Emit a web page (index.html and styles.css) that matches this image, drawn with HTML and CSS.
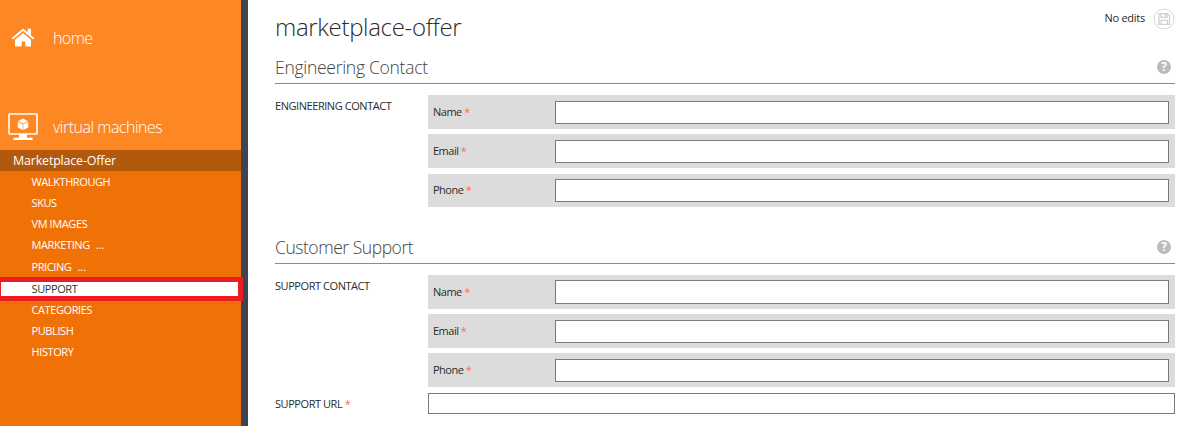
FILE: index.html
```html
<!DOCTYPE html>
<html lang="en">
<head>
<meta charset="utf-8">
<title>marketplace-offer</title>
<link rel="stylesheet" href="styles.css">
</head>
<body>
<div class="app">
  <nav class="sidebar">
    <a class="nav-main nav-home">
      <svg class="icon-home" width="24" height="20" viewBox="0 0 24 20"><path fill="#fff" d="M4 11.800 12 5 20 11.800V18.600H14.200V13.500H10.800V18.600H4z"/><path fill="none" stroke="#fff" stroke-width="1.800" d="M1.300 10.800 12 1.800 22.700 10.800"/><path fill="#fff" d="M16.600.8H20V7.500L16.600 4.600z"/></svg>
      <span>home</span>
    </a>
    <a class="nav-main nav-vm">
      <svg class="icon-vm" width="30" height="28" viewBox="0 0 30 28"><rect x="1" y="1" width="28" height="20" rx="1" fill="none" stroke="#fff" stroke-width="1.600"/><path fill="#fff" d="M11 21h8v3.800h5.500V27h-19V24.800H11z"/><path fill="#fff" d="M15 5.500 19.800 8 15 10.500 10.200 8zM9.800 8.700 14.700 11.300V17L9.800 14.400zM20.200 8.700 15.300 11.300V17L20.200 14.400z"/></svg>
      <span>virtual machines</span>
    </a>
    <div class="offer"><span>Marketplace-Offer</span></div>
    <ul class="menu">
      <li><span>WALKTHROUGH</span></li>
      <li><span>SKUS</span></li>
      <li><span>VM IMAGES</span></li>
      <li><span>MARKETING</span><i>...</i></li>
      <li class="pricing"><span>PRICING</span><i>...</i></li>
      <li class="selected"><span>SUPPORT</span></li>
      <li><span>CATEGORIES</span></li>
      <li><span>PUBLISH</span></li>
      <li><span>HISTORY</span></li>
    </ul>
  </nav>
  <main class="content">
    <header class="top">
      <h1>marketplace-offer</h1>
      <div class="status"><span>No edits</span>
        <svg width="22" height="22" viewBox="0 0 22 22"><circle cx="11" cy="11" r="10" fill="none" stroke="#d6d6d6"/><path fill="none" stroke="#cfcfcf" stroke-width="1.200" d="M6 5.600H14.500L16.500 7.600V16.300H6zM8 5.600V9.300H14V5.600M8 16.300V12.300H14.500V16.300M12.300 6V8.500"/></svg>
      </div>
    </header>
    <section>
      <div class="section-head"><h2>Engineering Contact</h2><b class="help">?</b></div>
      <div class="fields">
        <div class="label"><span>ENGINEERING CONTACT</span></div>
        <div class="group">
          <label class="row"><span>Name <em>*</em></span><input></label>
          <label class="row"><span>Email <em>*</em></span><input></label>
          <label class="row short"><span>Phone <em>*</em></span><input></label>
        </div>
      </div>
    </section>
    <section class="support">
      <div class="section-head"><h2 class="narrow">Customer Support</h2><b class="help">?</b></div>
      <div class="fields">
        <div class="label"><span>SUPPORT CONTACT</span></div>
        <div class="group">
          <label class="row tall"><span>Name <em>*</em></span><input></label>
          <label class="row"><span>Email <em>*</em></span><input></label>
          <label class="row"><span>Phone <em>*</em></span><input></label>
        </div>
      </div>
      <div class="fields url">
        <div class="label"><span>SUPPORT URL <em>*</em></span></div>
        <input>
      </div>
    </section>
  </main>
</div>
</body>
</html>
```
FILE: styles.css
```css
*, *::after { box-sizing: border-box; }
body { margin: 0; background: #fff; color: #2b2b2b; font: 11px/14px "Open Sans", "Noto Sans", sans-serif; }
.app { display: flex; height: 426px; overflow: hidden; }
.sidebar { width: 248px; flex: none; background: #f07105; border-right: 7px solid #3e4550; color: #fff; }
.nav-main { display: flex; align-items: center; background: #fd8723; font-size: 16px; line-height: 20px; font-weight: 300; }
.nav-home { height: 76px; padding-left: 11px; }
.nav-home span { margin-left: 18px; letter-spacing: -.6px; }
.nav-vm { height: 74px; padding: 28px 0 0 8px; }
.nav-vm span { margin-left: 15px; letter-spacing: -.5px; }
.offer { height: 21px; padding-left: 13px; background: #b2590d; font-size: 12.500px; line-height: 22px; letter-spacing: -.2px; }
.menu { list-style: none; margin: 0; padding: 0; font-size: 11px; letter-spacing: -.4px; }
.menu li { height: 21px; line-height: 21px; padding-left: 31.500px; }
.menu i { font-style: normal; margin-left: 6px; letter-spacing: 0; }
.menu .pricing { height: 22px; line-height: 23px; }
.menu .selected { position: relative; height: 14px; margin: 5px 0 3px; line-height: 14px; background: #fff; }
.menu .selected { color: #333; }
.menu .selected::after { content: ""; position: absolute; top: -5px; left: -4px; width: 247px; height: 24px; border: 5px solid #ed1c24; }
.content { flex: 1; padding: 0 12px 0 27px; }
.top { display: flex; justify-content: space-between; height: 50px; }
h1, h2 { margin: 0; font-weight: 300; }
h1 { font-size: 24px; line-height: 32px; padding-top: 11px; letter-spacing: -.32px; }
.status { display: flex; align-items: center; height: 22px; margin-top: 8px; gap: 8px; letter-spacing: -.25px; }
.status span { margin-top: -2px; }
.section-head { display: flex; justify-content: space-between; align-items: center; height: 34px; border-bottom: 1px solid #e27712; padding-right: 4px; }
h2 { font-size: 17.500px; line-height: 24px; letter-spacing: -.28px; color: #444; }
h2.narrow { letter-spacing: -.46px; }
.help { width: 14px; height: 14px; border-radius: 50%; background: #bcbcbc; color: #fff; text-align: center; font-size: 12px; line-height: 14px; }
.fields { display: grid; grid-template-columns: 153px 1fr; padding-top: 11px; }
.label { padding-top: 4px; letter-spacing: -.44px; }
.group { display: grid; row-gap: 5px; }
.row { display: flex; align-items: center; height: 34px; padding: 0 6px 0 5px; background: #dcdcdc; }
.row > span { width: 122px; letter-spacing: -.5px; }
.row.short { height: 33px; margin-top: 1px; }
.row.short > span, .row.tall > span { padding-bottom: 1px; }
em { font-style: normal; color: #ff6b60; }
input { flex: 1; min-width: 0; height: 23px; margin: 0; padding: 0 4px; border: 1px solid #7a7a7a; background: #fff; font: inherit; }
.row.tall input { height: 24px; }
.support { margin-top: 23px; }
.url { padding-top: 6px; }
.url input { height: 21px; }
```
